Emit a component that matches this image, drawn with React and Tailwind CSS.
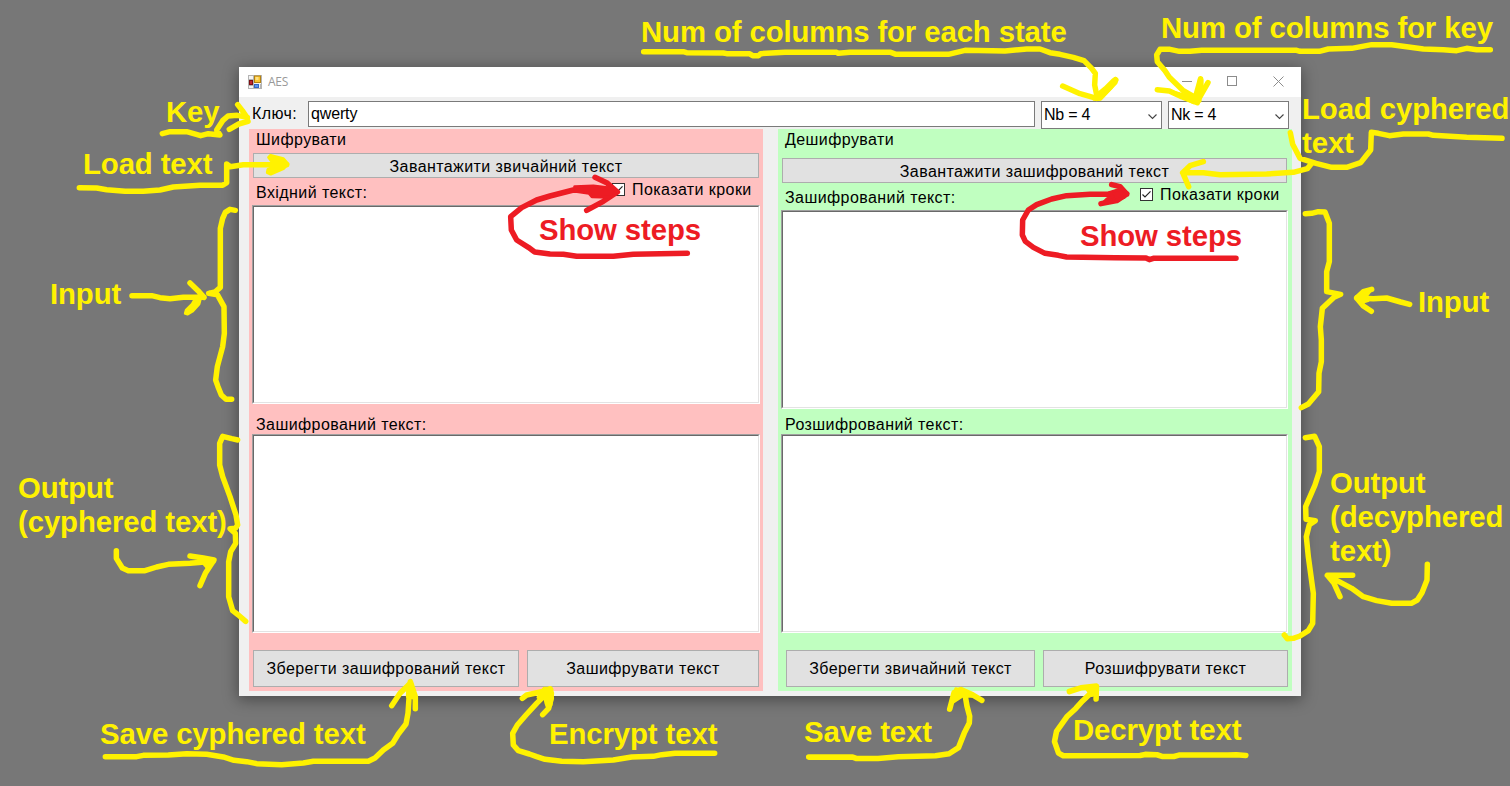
const labelFont = "font-['Liberation_Sans',Arial,sans-serif]";

const notes = [
  { text: ["Num of columns for each state"], pos: "left-[641px] top-[15px]" },
  { text: ["Num of columns for key"], pos: "left-[1161px] top-[11px]" },
  { text: ["Key"], pos: "left-[166px] top-[95px]" },
  { text: ["Load text"], pos: "left-[83px] top-[147px]" },
  { text: ["Load cyphered", "text"], pos: "left-[1302px] top-[92px]" },
  { text: ["Input"], pos: "left-[50px] top-[277px]" },
  { text: ["Input"], pos: "left-[1418px] top-[285px]" },
  { text: ["Output", "(cyphered text)"], pos: "left-[18px] top-[471px]" },
  { text: ["Output", "(decyphered", "text)"], pos: "left-[1330px] top-[466px]" },
  { text: ["Save cyphered text"], pos: "left-[100px] top-[717px]" },
  { text: ["Encrypt text"], pos: "left-[549px] top-[717px]" },
  { text: ["Save text"], pos: "left-[804px] top-[715px]" },
  { text: ["Decrypt text"], pos: "left-[1073px] top-[713px]" },
  { text: ["Show steps"], pos: "left-[539px] top-[213px]", red: true },
  { text: ["Show steps"], pos: "left-[1080px] top-[219px]", red: true },
];

// Hand-drawn marker strokes; each group has its own origin and is drawn at 3x.
const strokes = [
  {
    // key and load text
    at: "translate(0 60) scale(0.33333)",
    d: [
      "M487 221L510 215L560 215L602 227L625 221L660 225L650 210L668 182L684 168L712 166L742 172",
      "M713 134L727 152L742 174",
      "M688 208L716 192L744 184",
      "M238 383L290 384L320 389L375 394L430 394L480 390L520 381L600 376L668 376L680 368L680 312L690 320L730 314L800 314L860 314",
    ],
    fill: ["M812 286L850 296L864 312L850 326L812 342L802 338L804 328L818 322L818 308L806 292Z"],
  },
  {
    // columns for each state
    at: "translate(630 0) scale(0.33333)",
    d: [
      "M41 155L160 155L170 158L280 159L290 161L358 161L368 167L386 167L392 161L465 157L620 157L625 160L660 157L782 157L798 163L955 163L1005 151L1125 153L1190 147L1230 147L1260 158L1290 163L1330 172L1362 182L1385 205L1396 220L1394 255L1402 295",
      "M1298 258L1350 281L1400 295",
      "M1457 239L1440 262L1408 293",
    ],
    fill: ["M1448 240L1456 235L1461 241L1458 249L1412 298L1392 298L1404 280L1424 264Z"],
  },
  {
    // columns for key, load cyphered text
    at: "translate(1110 0) scale(0.33333)",
    d: [
      "M1141 149L1100 149L1070 145L1040 152L1000 149L940 147L890 140L845 134L785 134L725 145L655 147L628 154L570 154L560 151L275 151L240 154L208 154L180 148L150 148L140 165L142 185L165 212L178 232L220 272L262 296",
      "M142 269L178 273L215 290L262 308L272 236L270 290L294 248",
      "M1176 415L1070 412L970 406L955 402L880 402L838 407L805 400L784 397L782 450L752 488L710 502L665 502L618 490L570 475L548 433L541 398",
      "M605 490L592 506L550 517L470 522L330 524L280 518L218 518L236 560M218 518L240 497L280 485",
    ],
    fill: ["M188 276L235 288L254 286L268 236L276 240L276 262L270 304L250 308L210 288Z"],
  },
  {
    at: "translate(0 200) scale(0.33333)",
    d: [
      "M396 287L455 287L480 293L510 296L550 292L612 292M570 249L594 272L612 292",
      "M706 31L690 28L676 37L668 55L661 85L661 262L645 276L626 280L652 284L672 320L673 400L668 440L652 500L647 540L654 560L664 585L678 598L695 598",
    ],
    fill: ["M601 296L597 312L578 333L563 342L556 340L559 330L577 312L586 296Z"],
  },
  {
    at: "translate(0 420) scale(0.33333)",
    d: [
      "M713 60L695 56L668 49L659 70L659 135L668 170L690 230L708 285L713 315L706 325L690 326L706 340L707 370L692 395L686 425L686 530L698 572L715 585L737 604",
      "M349 392L349 415L367 444L385 452L435 452L470 441L505 433L570 430L640 424M570 408L610 414L642 420L616 460L600 497",
    ],
    fill: ["M610 416L640 418L638 430L624 446L612 432Z"],
  },
  {
    at: "translate(1270 200) scale(0.33333)",
    d: [
      "M106 41L125 40L145 35L165 36L178 70L178 185L170 215L170 275L212 283L192 292L157 325L151 380L154 420L154 485L147 520L146 575L115 612L94 623",
      "M419 313L392 306L350 294L310 296L260 294L280 275L305 268M260 294L280 318L304 334",
    ],
    fill: ["M258 290L300 274L288 290L294 302L280 306Z"],
  },
  {
    at: "translate(1270 420) scale(0.33333)",
    d: [
      "M106 53L134 49L148 80L148 155L135 195L107 260L108 298L136 302L118 314L109 350L115 410L130 520L128 610L115 632L90 648L70 655L52 656L43 645",
      "M472 433L471 480L456 518L442 540L424 550L365 550L320 542L280 530L245 505L172 466L248 466M172 466L192 490L210 530",
    ],
    fill: [],
  },
  {
    at: "translate(90 630) scale(0.33333)",
    d: [
      "M46 380L140 380L160 376L235 375L290 371L350 373L400 381L432 391L470 395L500 401L575 404L640 399L670 394L835 394L855 384L880 360L908 340L925 312L948 282L954 250L957 205L961 155M961 155L976 200L976 236M961 160L930 190L905 227",
    ],
    fill: ["M954 162L966 162L974 205L952 200Z"],
  },
  {
    at: "translate(490 630) scale(0.33333)",
    d: [
      "M674 370L555 370L515 374L490 379L425 381L370 390L280 395L215 394L165 388L140 380L118 372L85 362L70 345L68 310L82 285L108 255L140 220L182 178M97 205L110 195L178 180M180 176L184 205L176 235L158 254",
    ],
    fill: ["M162 175L183 175L188 190L183 225L174 238L168 220L162 195L144 202Z"],
  },
  {
    at: "translate(780 630) scale(0.33806)",
    d: [
      "M85 376L215 376L225 380L290 380L350 375L460 372L500 366L528 348L545 305L560 275L561 255L553 225L548 195M597 208L570 192L535 176L515 185L502 234",
      "M1378 371L1350 369L1325 370L1180 370L1165 374L1130 374L1115 369L1080 368L1065 371L838 372L824 364L812 330L818 300L850 255L875 232L895 210L935 172M856 182L890 171L936 166L935 204",
    ],
    fill: ["M520 174L556 184L570 196L540 195L514 212Z", "M905 172L934 168L934 190L922 194Z"],
  },
  {
    at: "translate(400 60) scale(0.33333)",
    red: true,
    d: [
      "M862 580L700 583L640 589L530 589L490 583L450 582L404 576L385 562L350 540L334 510L332 470L365 443L410 420L450 408L520 390L600 392L650 396M585 352L620 368L652 396L610 424L560 451",
    ],
    fill: ["M524 380L580 378L630 384L656 396L630 412L576 410L567 400L526 394Z"],
  },
  {
    at: "translate(780 60) scale(0.33333)",
    red: true,
    d: [
      "M1368 595L1120 595L1108 599L1098 594L1005 593L860 591L835 586L795 580L760 562L736 544L727 525L728 480L745 450L770 434L815 417L860 407L930 403L1040 403M995 374L1020 380L1040 402L1010 422L963 431",
    ],
    fill: ["M987 398L1025 386L1044 400L1033 412L990 427L970 428L982 416L1000 410Z"],
  },
];

function Marker() {
  return (
    <svg className="pointer-events-none absolute left-0 top-0" width="1510" height="786" viewBox="0 0 1510 786">
      {strokes.map((g, i) => {
        const c = g.red ? "#ed1c24" : "#fff200";
        return (
          <g key={i} transform={g.at} fill="none" stroke={c} strokeWidth="16.5" strokeLinecap="round" strokeLinejoin="round">
            {g.d.map((d) => (
              <path key={d} d={d} />
            ))}
            {g.fill.map((d) => (
              <path key={d} d={d} fill={c} strokeWidth="9" />
            ))}
          </g>
        );
      })}
    </svg>
  );
}

function Btn({ children, className }) {
  return (
    <button className={`border border-[#adadad] bg-[#e1e1e1] whitespace-nowrap text-center leading-[18px] tracking-[0.42px] ${className}`}>
      {children}
    </button>
  );
}

function Area({ className }) {
  return (
    <div className={`border border-t-[#a0a0a0] border-l-[#a0a0a0] border-r-white border-b-white ${className}`}>
      <div className="h-full w-full border border-t-[#696969] border-l-[#696969] border-r-[#e3e3e3] border-b-[#e3e3e3] bg-white" />
    </div>
  );
}

function Check({ className }) {
  return (
    <div className={`flex h-[18px] items-start gap-[7px] ${className}`}>
      <svg className="mt-[2px]" width="13" height="13" viewBox="0 0 13 13">
        <rect x="0.5" y="0.5" width="12" height="12" fill="#fff" stroke="#333" />
        <path d="M2.5 6.5L5 9L10.5 3.3" fill="none" stroke="#222" strokeWidth="1.2" />
      </svg>
      <span className="w-[120px] whitespace-nowrap leading-[18px]">Показати кроки</span>
    </div>
  );
}

function Combo({ children }) {
  return (
    <div className="flex h-7 w-[121px] justify-between border border-[#7a7a7a] bg-white pl-[2px] pr-1">
      <span className="pt-1 leading-[18px] tracking-[-0.25px]">{children}</span>
      <svg className="mt-[10px]" width="9" height="9" viewBox="0 0 9 9">
        <path d="M0.5 2.5L4.5 6.5L8.5 2.5" fill="none" stroke="#444" strokeWidth="1.1" />
      </svg>
    </div>
  );
}

function AppIcon() {
  return (
    <svg width="14" height="14" viewBox="0 0 14 14">
      <rect x="0.5" y="0.5" width="13" height="13" fill="#f4f4f4" stroke="#b4b4b4" />
      <path d="M5.5 0.5V13.5M0.5 4.5H6M0.5 10.5H6M12.5 9V13" stroke="#b4b4b4" />
      <rect x="6.5" y="1" width="6" height="6.5" fill="#fbc52c" stroke="#b58212" />
      <rect x="7.5" y="2" width="3" height="3" fill="#fee083" />
      <rect x="1.5" y="5.5" width="3" height="4" fill="#c1272d" stroke="#7c1013" />
      <rect x="6.5" y="9.5" width="4" height="3" fill="#5b95ee" stroke="#3467c4" />
    </svg>
  );
}

export default function App() {
  return (
    <div className={`relative flex h-[786px] w-[1510px] overflow-hidden bg-[#777777] pl-[239px] pt-[67px] text-[16px] text-black ${labelFont}`}>
      <main className="flex h-[629px] w-[1062px] flex-col bg-[#f0f0f0] shadow-[0_3px_14px_1px_rgba(0,0,0,0.38)]">
        <header className="flex h-[30px] shrink-0 items-center bg-white pl-[9px]">
          <AppIcon />
          <span className="ml-[6px] font-['Open_Sans','Noto_Sans',sans-serif] text-[12px] tracking-[-0.3px] text-[#999]">AES</span>
          <svg className="ml-auto mr-[16px]" width="103" height="12" viewBox="0 0 103 12" fill="none" stroke="#8c8c8c">
            <path d="M0 5.5H10" />
            <rect x="45.5" y="0.5" width="9" height="9" />
            <path d="M91.5 0.5L101.5 10.5M101.5 0.5L91.5 10.5" />
          </svg>
        </header>
        <div className="flex h-8 shrink-0 items-start pl-[13px] pt-1">
          <span className="w-[56px] pt-1 leading-[18px] tracking-[0.42px]">Ключ:</span>
          <div className="mr-[6px] h-[26px] w-[727px] border border-[#7a7a7a] bg-white pl-[2px] pt-[3px] leading-[18px] tracking-[-0.15px]">qwerty</div>
          <div className="flex gap-[6px]">
            <Combo>Nb = 4</Combo>
            <Combo>Nk = 4</Combo>
          </div>
        </div>
        <div className="flex gap-[15px] pl-[10px] tracking-[0.42px]">
          <section className="flex h-[562px] w-[514px] flex-col bg-[#ffc0c0] pl-[3px]">
            <h2 className="mt-[2px] h-[22px] pl-1 leading-[18px]">Шифрувати</h2>
            <Btn className="ml-px h-[25px] w-[506px] pt-[2px]">Завантажити звичайний текст</Btn>
            <div className="flex h-[27px] justify-between pl-1 pr-[11px]">
              <span className="pt-[6px] leading-[18px]">Вхідний текст:</span>
              <Check className="mt-[3px]" />
            </div>
            <Area className="h-[199px] w-[508px]" />
            <div className="h-[30px] pl-1 pt-[12px] leading-[18px]">Зашифрований текст:</div>
            <Area className="h-[199px] w-[508px]" />
            <div className="ml-px mt-[17px] flex gap-2">
              <Btn className="h-[37px] w-[266px]">Зберегти зашифрований текст</Btn>
              <Btn className="h-[37px] w-[232px]">Зашифрувати текст</Btn>
            </div>
          </section>
          <section className="flex h-[562px] w-[514px] flex-col bg-[#c0ffc0] pl-[3px]">
            <h2 className="mt-[2px] h-[27px] pl-1 leading-[18px]">Дешифрувати</h2>
            <Btn className="ml-px h-[25px] w-[505px] pt-[2px]">Завантажити зашифрований текст</Btn>
            <div className="flex h-[27px] justify-between pl-1 pr-[12px]">
              <span className="pt-[6px] leading-[18px]">Зашифрований текст:</span>
              <Check className="mt-[3px]" />
            </div>
            <Area className="h-[199px] w-[507px]" />
            <div className="h-[25px] pl-1 pt-[7px] leading-[18px]">Розшифрований текст:</div>
            <Area className="h-[199px] w-[507px]" />
            <div className="ml-[5px] mt-[17px] flex gap-2">
              <Btn className="h-[37px] w-[249px]">Зберегти звичайний текст</Btn>
              <Btn className="h-[37px] w-[245px]">Розшифрувати текст</Btn>
            </div>
          </section>
        </div>
      </main>
      <Marker />
      {notes.map((n, i) => (
        <div
          key={i}
          className={`absolute whitespace-nowrap text-[29.33px] font-bold leading-[34px] tracking-[-0.1px] ${n.red ? "text-[#ed1c24]" : "text-[#fff200]"} ${n.pos}`}
        >
          {n.text.map((t) => (
            <div key={t}>{t}</div>
          ))}
        </div>
      ))}
    </div>
  );
}
